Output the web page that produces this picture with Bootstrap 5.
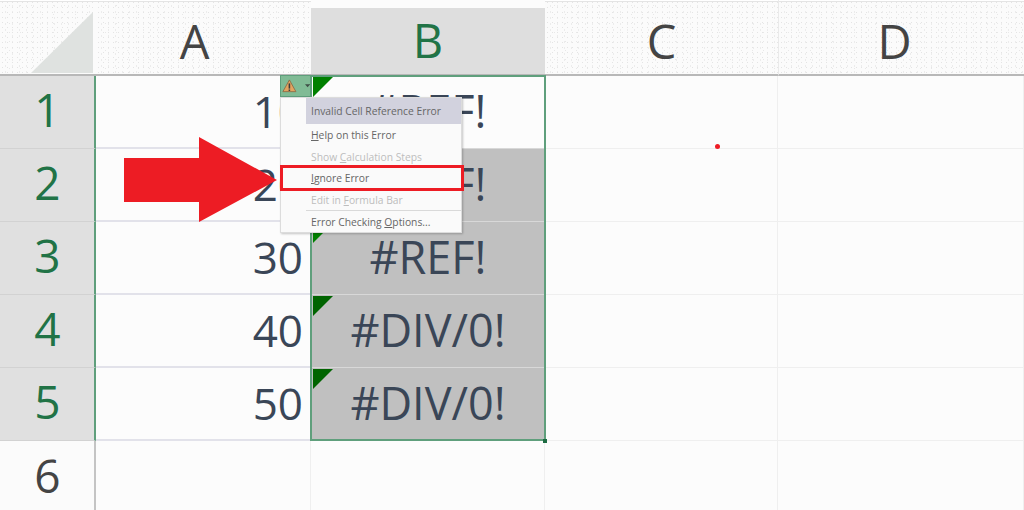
<!DOCTYPE html>
<html lang="en"><head><meta charset="utf-8"><title>Excel</title>
<link href="https://cdn.jsdelivr.net/npm/bootstrap@5.3.0/dist/css/bootstrap.min.css" rel="stylesheet">
<style>
html,body{margin:0;height:510px;overflow:hidden;background:#fcfcfc}
.sheet{position:relative;width:1024px;height:510px;display:grid;grid-template-columns:96px 215px 234px 233px 246px;grid-template-rows:76px repeat(5,73px) 69px;font-family:"Open Sans","Noto Sans",sans-serif;font-size:46px;color:#3a4657}
.stip{background-color:#fbfbfb;background-image:linear-gradient(#fff 0 1px,#e4e4e4 1px 2px,transparent 2px),radial-gradient(#e4e4e4 0.7px,transparent 1px),radial-gradient(#ececec 0.7px,transparent 1px),radial-gradient(#e8e8e8 0.6px,transparent 1px);background-size:100% 100%,5px 5px,7px 6px,11px 9px;background-position:0 0,0 0,2px 3px,4px 1px}
.hd{display:flex;align-items:center;justify-content:center;border-bottom:2px solid #b8b8b8;color:#444;font-size:47px;padding-top:9px}
.hd.ca1{padding-right:18px}
.hd.cd1{padding-right:14px}
.hd.lastc{border-left:1px solid #eaeaea}
.hd.on{background:#dedede;background-clip:padding-box;color:#217346;margin-top:8px;padding-top:0;padding-bottom:2px;height:68px}
.hd.corner{padding:0}
.rh{display:flex;align-items:center;justify-content:center;background:#e0e0e0;color:#217346;border-right:2px solid #5f9f7c;border-bottom:1px solid #d2d2d2;font-size:46px;padding-bottom:6px;padding-left:1px}
.rh.off{background-color:#fbfbfb;color:#444;border-right:2px solid #c4c4c4;border-bottom:0;padding-bottom:0}
.ca{display:flex;align-items:center;justify-content:flex-end;padding-right:7px;padding-bottom:1px;border-bottom:2px solid #e2e2ea;border-right:1px solid #e8e8e8;font-size:44px}
.cb{position:relative;display:flex;align-items:center;justify-content:center;border-bottom:1px solid #d8d8d8;font-size:45px;padding-bottom:2px}
.cb.gr{background:#c0c0c0}
.ce{border-bottom:1px solid #efefef;border-right:1px solid #efefef}
.ce.nob{border-bottom:0}
.tri{position:absolute;left:2px;top:1px;width:0;height:0;border-top:20px solid #008000;border-right:20px solid transparent}
.tri.dk{border-top-color:#006400}
.selbox{position:absolute;left:310px;top:75px;width:236px;height:366px;border:2px solid #5f9f7c;pointer-events:none}
.handle{position:absolute;left:543px;top:439px;width:4px;height:4px;background:#1d6b42}
.dotr{position:absolute;left:715px;top:144px;width:5px;height:5px;border-radius:50%;background:#ee1c25}
.wbtn{position:absolute;left:280px;top:75px;width:31px;height:22px;background:#80bb95;border:1px solid #5f9f7c;display:flex;align-items:center;gap:4px;padding-left:1px}
.wbtn svg{display:block}
.emenu{position:absolute;left:280px;top:97px;width:182px;height:136px;background:#fafafa;border:1px solid #dcdcdc;box-shadow:1px 1px 2px rgba(0,0,0,.22);padding:0 0 0 25px;font-family:"Open Sans",sans-serif;font-size:10.3px;line-height:1;color:#666}
.emenu div{display:flex;align-items:center;padding-left:5px;padding-top:1px;white-space:nowrap}
.emenu .hdr{height:26px;background:#d2d2de}
.emenu .h22{height:22px}
.emenu .h21{height:21px}
.emenu .dis{color:#bdbdbd}
.emenu .sep{height:0;padding:0;border-top:1px solid #d9d9d9}
.redb{position:absolute;left:280px;top:165px;width:184px;height:26px;border:3px solid #ed1c24}
.arrow{position:absolute;left:123px;top:136px}
</style></head>
<body>
<div class="sheet">
  <div class="hd stip corner"><svg width="96" height="74" class="d-block" viewBox="0 0 96 74"><polygon points="31,73 93,12 93,73" fill="#dfe2e0"/></svg></div>
  <div class="hd stip ca1">A</div>
  <div class="hd on">B</div>
  <div class="hd stip">C</div>
  <div class="hd stip lastc cd1">D</div>

  <div class="rh">1</div><div class="ca">10</div><div class="cb"><span class="tri"></span>#REF!</div><div class="ce"></div><div class="ce"></div>
  <div class="rh">2</div><div class="ca">20</div><div class="cb gr">#REF!</div><div class="ce"></div><div class="ce"></div>
  <div class="rh">3</div><div class="ca">30</div><div class="cb gr"><span class="tri"></span>#REF!</div><div class="ce"></div><div class="ce"></div>
  <div class="rh">4</div><div class="ca">40</div><div class="cb gr"><span class="tri dk"></span>#DIV/0!</div><div class="ce"></div><div class="ce"></div>
  <div class="rh">5</div><div class="ca">50</div><div class="cb gr"><span class="tri dk"></span>#DIV/0!</div><div class="ce"></div><div class="ce"></div>
  <div class="rh off stip">6</div><div class="ce nob"></div><div class="ce nob"></div><div class="ce nob"></div><div class="ce nob"></div>

  <div class="selbox"></div><div class="handle"></div><div class="dotr"></div>

  <div class="wbtn">
    <svg width="17" height="16" viewBox="0 0 17 16"><polygon points="8.5,1 16,14.5 1,14.5" fill="#e3a35f" stroke="#8a6a45" stroke-width="1"/><rect x="7.6" y="5" width="1.8" height="6" fill="#3b3b3b"/><rect x="7.6" y="12" width="1.8" height="1.7" fill="#3b3b3b"/></svg>
    <svg class="ms-1" width="6" height="4" viewBox="0 0 6 4"><polygon points="0,0 6,0 3,3.5" fill="#3f4f47"/></svg>
  </div>

  <div class="emenu">
    <div class="hdr">Invalid Cell Reference Error</div>
    <div class="h22"><span><u>H</u>elp on this Error</span></div>
    <div class="h21 dis"><span>Show <u>C</u>alculation Steps</span></div>
    <div class="h22"><span><u>I</u>gnore Error</span></div>
    <div class="h21 dis"><span>Edit in <u>F</u>ormula Bar</span></div>
    <div class="sep"></div>
    <div class="h22"><span>Error Checking <u>O</u>ptions...</span></div>
  </div>
  <div class="redb"></div>
  <svg class="arrow" width="156" height="88" viewBox="0 0 156 88"><polygon points="1,22 76,22 76,1 154,44 76,86 76,66 1,66" fill="#ed1c24"/></svg>
</div>
<script src="https://cdn.jsdelivr.net/npm/bootstrap@5.3.0/dist/js/bootstrap.bundle.min.js"></script>
</body></html>
